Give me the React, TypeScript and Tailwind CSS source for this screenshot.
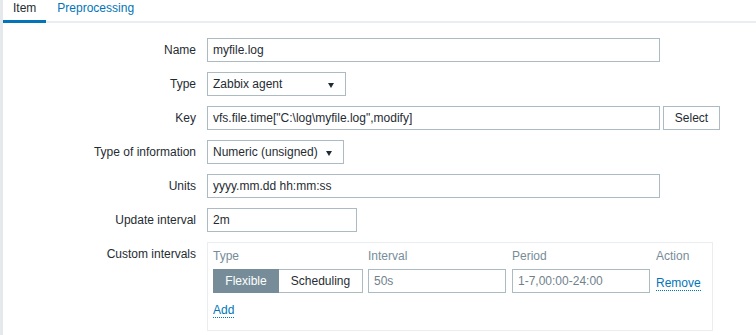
import React from "react";

const inputCls =
  "h-[24px] border border-[#acbbc2] bg-white px-[5px] text-[12px] text-[#1f2c33] outline-none";

function Row({ label, children }: { label: string; children: React.ReactNode }) {
  return (
    <div className="flex">
      <div className="w-[204px] shrink-0 pr-[11px] pt-[5px] text-right">{label}</div>
      <div className="flex">{children}</div>
    </div>
  );
}

function Select({ value, width }: { value: string; width: string }) {
  return (
    <div className={`${inputCls} ${width} flex items-center justify-between pr-[11px]`}>
      <span>{value}</span>
      <span className="mt-[3px] h-0 w-0 border-x-[3px] border-t-[5px] border-x-transparent border-t-[#1f2c33]" />
    </div>
  );
}

export default function App() {
  return (
    <div className="h-[335px] w-[756px] overflow-hidden border-l-[3px] border-[#e6e9eb] bg-white font-['Liberation_Sans',Arial,sans-serif] text-[12px] leading-[14px] text-[#1f2c33]">
      {/* tabs */}
      <div className="flex h-[23px] border-b-2 border-[#ebeef0]">
        <div className="-mb-[2px] h-[23px] border-b-[3px] border-[#0275b8] px-[10px] leading-[16px]">Item</div>
        <div className="-mb-[2px] h-[23px] pl-[11px] pr-[10px] leading-[16px] text-[#0275b8]">Preprocessing</div>
      </div>

      <div className="mt-[15px] flex flex-col gap-[10px]">
        <Row label="Name">
          <input readOnly value="myfile.log" className={`${inputCls} w-[453px]`} />
        </Row>
        <Row label="Type">
          <Select value="Zabbix agent" width="w-[139px]" />
        </Row>
        <Row label="Key">
          <input readOnly value={'vfs.file.time["C:\\log\\myfile.log",modify]'} className={`${inputCls} w-[453px]`} />
          <button className="ml-[3px] h-[24px] w-[57px] border border-[#acbbc2] bg-white text-[12px] text-[#1f2c33]">
            Select
          </button>
        </Row>
        <Row label="Type of information">
          <Select value="Numeric (unsigned)" width="w-[137px]" />
        </Row>
        <Row label="Units">
          <input readOnly value="yyyy.mm.dd hh:mm:ss" className={`${inputCls} w-[453px]`} />
        </Row>
        <Row label="Update interval">
          <input readOnly value="2m" className={`${inputCls} w-[150px]`} />
        </Row>
        <Row label="Custom intervals">
          <div className="w-[506px] border border-[#ebeef0] pl-[5px] pt-[6px] pb-[13px]">
            <div className="grid grid-cols-[155px_144px_144px_auto] text-[#768d99]">
              <div className="pb-[6px]">Type</div>
              <div>Interval</div>
              <div>Period</div>
              <div>Action</div>

              <div className="flex h-[24px]">
                <div className="flex w-[66px] items-center justify-center border border-[#768d99] bg-[#768d99] text-white">
                  Flexible
                </div>
                <div className="flex w-[84px] items-center justify-center border border-l-0 border-[#acbbc2] text-[#1f2c33]">
                  Scheduling
                </div>
              </div>
              <div>
                <input readOnly value="50s" className={`${inputCls} w-[138px] text-[#6f828c]`} />
              </div>
              <div>
                <input readOnly value="1-7,00:00-24:00" className={`${inputCls} w-[138px] text-[#6f828c]`} />
              </div>
              <div className="pt-[7px]">
                <span className="border-b border-dotted border-[#0275b8] text-[#0275b8]">Remove</span>
              </div>
            </div>
            <div className="pt-[10px]">
              <span className="border-b border-dotted border-[#0275b8] text-[#0275b8]">Add</span>
            </div>
          </div>
        </Row>
      </div>
    </div>
  );
}
